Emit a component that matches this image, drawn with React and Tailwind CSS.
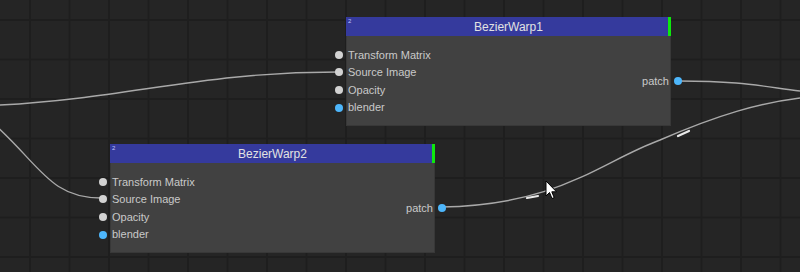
const inputs = [
  { name: "Transform Matrix", kind: "gray" },
  { name: "Source Image", kind: "gray" },
  { name: "Opacity", kind: "gray" },
  { name: "blender", kind: "blue" },
];

function Port({ kind, side }) {
  return (
    <span
      className={`absolute top-1/2 -translate-y-1/2 w-[8px] h-[8px] rounded-full ${
        kind === "blue" ? "bg-[#4db6fb]" : "bg-[#d2d2d2]"
      } ${side === "left" ? "-left-[12px]" : "-right-[12px]"}`}
    />
  );
}

function Node({ title, badge, className }) {
  return (
    <div className={`absolute w-[325px] ${className}`}>
      <div className="relative h-[19px] bg-[#353a9d] flex items-center justify-center">
        <span className="absolute left-[2px] top-[1px] text-[6px] leading-none text-[#c0c4ff]">{badge}</span>
        <span className="text-[12px] text-[#e2e2e2]">{title}</span>
        <span className="absolute right-0 top-0 h-full w-[3px] bg-[#0ee80e]" />
      </div>
      <div className="bg-[#414141] border border-t-0 border-[#383838] pt-[10px] pb-[9px] flex justify-between">
        <div className="flex flex-col">
          {inputs.map((p) => (
            <div key={p.name} className="relative h-[17.6px] flex items-center pl-[1px] text-[11px] text-[#c9c9c9]">
              <Port kind={p.kind} side="left" />
              {p.name}
            </div>
          ))}
        </div>
        <div className="flex items-center">
          <div className="relative h-[17.6px] flex items-center pr-[1px] text-[11px] text-[#c9c9c9]">
            patch
            <Port kind="blue" side="right" />
          </div>
        </div>
      </div>
    </div>
  );
}

export default function App() {
  return (
    <div
      className="relative w-[800px] h-[272px] overflow-hidden bg-[#252525] bg-[linear-gradient(to_right,#1e1e1e_2px,transparent_2px),linear-gradient(to_bottom,#1e1e1e_2px,transparent_2px)] bg-[size:39.5px_39.5px] bg-[position:29px_19px]"
      style={{ fontFamily: '"Liberation Sans", Arial, sans-serif' }}
    >
      <svg className="absolute inset-0 pointer-events-none" width="800" height="272">
        <g fill="none" stroke="#a9a9a9" strokeWidth="1.4">
          <path d="M0 105 C130 98 200 72 338 72" />
          <path d="M-6 124 C40 165 50 198 101 198" />
          <path d="M679 81 C740 81 760 86 800 91" />
          <path d="M441 207 C560 205 600 162 660 140 C720 114 760 103 800 98" />
        </g>
        <g stroke="#e8e8e8" strokeWidth="2.2" strokeLinecap="round">
          <line x1="527" y1="198" x2="538" y2="196" />
          <line x1="678" y1="136" x2="689" y2="131" />
        </g>
      </svg>

      <Node title="BezierWarp1" badge="2" className="left-[346px] top-[17px]" />
      <Node title="BezierWarp2" badge="2" className="left-[110px] top-[144px] w-[324px]" />

      <svg className="absolute left-[545px] top-[180px]" width="13" height="21" viewBox="0 0 13 21">
        <path d="M1 1 L1 16 L4.5 12.5 L7 18.5 L9.2 17.6 L6.8 11.8 L11.5 11.8 Z" fill="#fff" stroke="#000" strokeWidth="1" />
      </svg>
    </div>
  );
}
